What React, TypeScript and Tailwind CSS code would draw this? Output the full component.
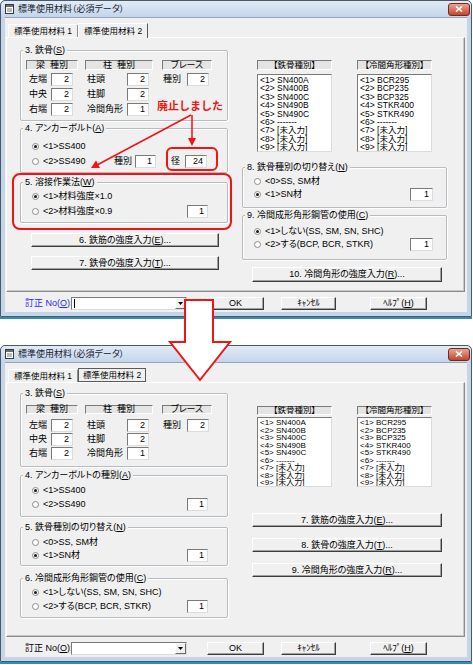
import React from "react";

type Kids = { children?: React.ReactNode };

const U = ({ c }: { c: string }) => <span className="underline">{c}</span>;

function Num({ v, w = "w-[22px]" }: { v: string; w?: string }) {
  return (
    <div
      className={`${w} h-[13px] shrink-0 bg-white border border-t-[#7a7a7a] border-l-[#7a7a7a] border-r-[#dcdcdc] border-b-[#dcdcdc] flex items-center justify-end pr-[3px] leading-none`}
    >
      {v}
    </div>
  );
}

function Radio({ on }: { on?: boolean }) {
  return (
    <span className="w-[7px] h-[7px] shrink-0 rounded-full border border-[#8c8c8c] bg-white flex items-center justify-center">
      {on && <span className="w-[3px] h-[3px] rounded-full bg-[#1a1a1a]" />}
    </span>
  );
}

function Opt({
  on,
  label,
  h = "h-[14px]",
  children,
}: { on?: boolean; label: string; h?: string } & Kids) {
  return (
    <div className={`${h} flex items-center`}>
      <Radio on={on} />
      <span className="ml-[4px] whitespace-nowrap">{label}</span>
      {children}
    </div>
  );
}

function Group({
  title,
  className = "",
  children,
}: { title: React.ReactNode; className?: string } & Kids) {
  return (
    <div
      className={`shrink-0 border border-[#b7bcc1] rounded-[2px] shadow-[inset_1px_1px_0_#fff,1px_1px_0_#fff] ${className}`}
    >
      <div className="-mt-[6px] ml-[2px] w-fit px-[2px] bg-[#f0f0f0] leading-[11px] whitespace-nowrap">
        {title}
      </div>
      {children}
    </div>
  );
}

function Btn({ className = "", children }: { className?: string } & Kids) {
  return (
    <div
      className={`shrink-0 bg-[#f0f0f0] border border-t-white border-l-white border-r-[#3c3c3c] border-b-[#3c3c3c] shadow-[inset_-1px_-1px_0_#a0a0a0] flex items-center justify-center whitespace-nowrap leading-none ${className}`}
    >
      {children}
    </div>
  );
}

function Hdr({ className = "", children }: { className?: string } & Kids) {
  return (
    <div
      className={`shrink-0 bg-[#e4e4e4] border border-t-[#7a7a7a] border-l-[#7a7a7a] border-r-white border-b-white flex items-center justify-center whitespace-pre leading-none ${className}`}
    >
      {children}
    </div>
  );
}

function List({
  items,
  row,
  className = "",
}: {
  items: string[];
  row: string;
  className?: string;
}) {
  return (
    <div
      className={`w-[75px] shrink-0 bg-white border border-t-[#7a7a7a] border-l-[#7a7a7a] border-r-[#dcdcdc] border-b-[#dcdcdc] pl-[2px] overflow-hidden ${className}`}
    >
      {items.map((t) => (
        <div key={t} className={`whitespace-pre flex items-center ${row}`}>
          {t}
        </div>
      ))}
    </div>
  );
}

const steelList = [
  "<1> SN400A",
  "<2> SN400B",
  "<3> SN400C",
  "<4> SN490B",
  "<5> SN490C",
  "<6> -------",
  "<7> [未入力]",
  "<8> [未入力]",
  "<9> [未入力]",
];
const coldList = [
  "<1> BCR295",
  "<2> BCP235",
  "<3> BCP325",
  "<4> STKR400",
  "<5> STKR490",
  "<6> -------",
  "<7> [未入力]",
  "<8> [未入力]",
  "<9> [未入力]",
];

function Steel({ box, hdr, rows }: { box: string; hdr: string; rows: string }) {
  return (
    <Group title={<>3. 鉄骨(<U c="S" />)</>} className={box}>
      <div className={`ml-[5px] flex ${hdr}`}>
        <Hdr className="w-[52px]">梁  種別</Hdr>
        <Hdr className="w-[68px] ml-[7px]">柱  種別</Hdr>
        <Hdr className="w-[50px] ml-[9px]">ブレース</Hdr>
      </div>
      <div className={`flex flex-col pl-[8px] ${rows}`}>
        <div className="flex items-center h-[13px]">
          <span className="w-[22px]">左端</span>
          <Num v="2" />
          <span className="w-[40px] ml-[14px]">柱頭</span>
          <Num v="2" />
          <span className="w-[24px] ml-[14px]">種別</span>
          <Num v="2" />
        </div>
        <div className="flex items-center h-[13px]">
          <span className="w-[22px]">中央</span>
          <Num v="2" />
          <span className="w-[40px] ml-[14px]">柱脚</span>
          <Num v="2" />
        </div>
        <div className="flex items-center h-[13px]">
          <span className="w-[22px]">右端</span>
          <Num v="2" />
          <span className="w-[40px] ml-[14px] whitespace-nowrap">冷間角形</span>
          <Num v="1" />
        </div>
      </div>
    </Group>
  );
}

function Win({
  focusTab,
  blue,
  caret,
  children,
}: { focusTab?: boolean; blue?: boolean; caret?: boolean } & Kids) {
  return (
    <div className="w-[472px] shrink-0 flex flex-col">
      <div className="h-[317px] flex flex-col border border-[#4a5868] rounded-t-[5px] bg-[#c4d5ea] px-[4px] pb-[4px]">
        <div className="h-[16px] shrink-0 flex items-center bg-gradient-to-b from-[#e2ebf6] to-[#c4d5ea] -mx-[4px] pl-[4px] pr-[1px] rounded-t-[5px]">
          <svg width="9" height="10" viewBox="0 0 9 10">
            <rect x="0.5" y="0.5" width="8" height="9" fill="#fff" stroke="#3a3a3a" />
            <rect x="1" y="1" width="7" height="2" fill="#6b6b6b" />
            <path d="M2 5h5M2 7h5" stroke="#7a7a7a" />
          </svg>
          <span className="ml-[4px] text-[#17212d]">標準使用材料（必須データ）</span>
          <div className="ml-auto w-[22px] h-[13px] rounded-[3px] border border-[#6e2a22] bg-gradient-to-b from-[#e9a392] to-[#c2432d] flex items-center justify-center">
            <svg width="8" height="6" viewBox="0 0 8 6">
              <path d="M1 0.5 7 5.5M7 0.5 1 5.5" stroke="#fff" strokeWidth="1.6" />
            </svg>
          </div>
        </div>
        <div className="flex-1 flex flex-col bg-[#f0f0f0] border-t border-[#95a6ba]">
          <div className="h-[19px] shrink-0 flex items-end pl-[3px] text-[8.5px]">
            <div className="h-[13px] px-[5px] flex items-center border-t border-l border-r border-t-white border-l-white border-r-[#8c8c8c] rounded-t-[2px] whitespace-nowrap">
              標準使用材料 1
            </div>
            {focusTab ? (
              <div className="h-[14px] px-[4px] flex items-center border border-[#5a5a5a] whitespace-nowrap">
                標準使用材料 2
              </div>
            ) : (
              <div className="h-[15px] -mb-px px-[5px] flex items-center bg-[#f0f0f0] border-t border-l border-r border-t-white border-l-white border-r-[#5a5a5a] relative whitespace-nowrap">
                標準使用材料 2
              </div>
            )}
          </div>
          <div className="ml-[1px] w-[459px] h-[255px] shrink-0 border border-t-white border-l-white border-r-[#8c8c8c] border-b-[#8c8c8c] shadow-[inset_-1px_-1px_0_#c8c8c8]">
            {children}
          </div>
          <div className="flex-1 flex items-center pl-[20px] pt-[2px]">
            <span className={`w-[46px] whitespace-nowrap ${blue ? "text-[#2828ff]" : ""}`}>
              訂正 No(<U c="O" />):
            </span>
            <div className="w-[116px] h-[13px] bg-white border border-t-[#7a7a7a] border-l-[#7a7a7a] border-r-[#dcdcdc] border-b-[#dcdcdc] flex">
              {caret && <span className="ml-[2px] mt-[1px] w-px h-[9px] bg-black" />}
              <div className="ml-auto w-[11px] h-full bg-[#f0f0f0] border border-t-white border-l-white border-r-[#6a6a6a] border-b-[#6a6a6a] flex items-center justify-center">
                <svg width="5" height="3" viewBox="0 0 5 3">
                  <path d="M0 0h5L2.5 3z" fill="#000" />
                </svg>
              </div>
            </div>
            <Btn className="ml-[20px] w-[57px] h-[13px]">OK</Btn>
            <Btn className="ml-[17px] w-[55px] h-[13px]">ｷｬﾝｾﾙ</Btn>
            <Btn className="ml-[34px] w-[57px] h-[13px]">
              ﾍﾙﾌﾟ(<U c="H" />)
            </Btn>
          </div>
        </div>
      </div>
      <div className="h-[2px] bg-[#2d8fb5]" />
    </div>
  );
}

function TopPanel() {
  return (
    <div className="flex pl-[13px] pt-[12px]">
      <div className="w-[208px] shrink-0 flex flex-col">
        <Steel box="h-[71px]" hdr="mt-[4px] h-[10px]" rows="mt-[3px] gap-[2px]" />
        <Group title={<>4. アンカーボルト(<U c="A" />)</>} className="h-[45px] mt-[7px]">
          <div className="mt-[5px] flex flex-col gap-[1px] pl-[11px]">
            <Opt on label="<1>SS400" />
            <div className="h-[14px] flex items-center">
              <Radio />
              <span className="ml-[4px] w-[71px] whitespace-nowrap">{"<2>SS490"}</span>
              <span className="w-[21px]">種別</span>
              <Num v="1" w="w-[21px]" />
              <span className="ml-[15px] w-[14px]">径</span>
              <Num v="24" />
            </div>
          </div>
        </Group>
        <Group title={<>5. 溶接作業法(<U c="W" />)</>} className="h-[41px] mt-[9px]">
          <div className="mt-[1px] flex flex-col gap-[1px] pl-[11px] pr-[19px]">
            <Opt on label="<1>材料強度×1.0" />
            <Opt label="<2>材料強度×0.9">
              <div className="ml-auto">
                <Num v="1" w="w-[21px]" />
              </div>
            </Opt>
          </div>
        </Group>
        <Btn className="mt-[10px] ml-[11px] w-[188px] h-[14px]">
          6. 鉄筋の強度入力(<U c="E" />)...
        </Btn>
        <Btn className="mt-[9px] ml-[11px] w-[188px] h-[14px]">
          7. 鉄骨の強度入力(<U c="T" />)...
        </Btn>
      </div>
      <div className="w-[205px] ml-[14px] shrink-0 flex flex-col">
        <div className="mt-[10px] flex h-[10px] text-[8.5px]">
          <Hdr className="ml-[15px] w-[75px]">【鉄骨種別】</Hdr>
          <Hdr className="ml-[25px] w-[75px]">【冷間角形種別】</Hdr>
        </div>
        <div className="mt-[4px] flex">
          <List
            items={steelList}
            row="h-[8.4px] leading-[8.4px]"
            className="ml-[15px] h-[78px] text-[8.5px] pt-px"
          />
          <List
            items={coldList}
            row="h-[8.4px] leading-[8.4px]"
            className="ml-[25px] h-[78px] text-[8.5px] pt-px"
          />
        </div>
        <Group title={<>8. 鉄骨種別の切り替え(<U c="N" />)</>} className="h-[41px] mt-[15px]">
          <div className="mt-[2px] flex flex-col pl-[11px] pr-[13px]">
            <Opt h="h-[13px]" label="<0>SS, SM材" />
            <Opt h="h-[13px]" on label="<1>SN材">
              <div className="ml-auto">
                <Num v="1" w="w-[23px]" />
              </div>
            </Opt>
          </div>
        </Group>
        <Group title={<>9. 冷間成形角形鋼管の使用(<U c="C" />)</>} className="h-[45px] mt-[7px]">
          <div className="mt-[4px] flex flex-col pl-[11px] pr-[13px]">
            <Opt h="h-[13px]" on label="<1>しない(SS, SM, SN, SHC)" />
            <Opt h="h-[13px]" label="<2>する(BCP, BCR, STKR)">
              <div className="ml-auto">
                <Num v="1" w="w-[23px]" />
              </div>
            </Opt>
          </div>
        </Group>
        <Btn className="mt-[7px] ml-[10px] w-[190px] h-[15px]">
          10. 冷間角形の強度入力(<U c="R" />)...
        </Btn>
      </div>
    </div>
  );
}

function BottomPanel() {
  return (
    <div className="flex pl-[13px] pt-[10px]">
      <div className="w-[208px] shrink-0 flex flex-col">
        <Steel box="h-[74px]" hdr="mt-[6px] h-[9px]" rows="mt-[5px] gap-[1px]" />
        <Group title={<>4. アンカーボルトの種別(<U c="A" />)</>} className="h-[42px] mt-[8px]">
          <div className="mt-[2px] flex flex-col pl-[11px] pr-[19px]">
            <Opt on label="<1>SS400" />
            <Opt label="<2>SS490">
              <div className="ml-auto">
                <Num v="1" w="w-[21px]" />
              </div>
            </Opt>
          </div>
        </Group>
        <Group title={<>5. 鉄骨種別の切り替え(<U c="N" />)</>} className="h-[39px] mt-[10px]">
          <div className="mt-[2px] flex flex-col pl-[11px] pr-[19px]">
            <Opt label="<0>SS, SM材" />
            <Opt on h="h-[13px]" label="<1>SN材">
              <div className="ml-auto">
                <Num v="1" w="w-[21px]" />
              </div>
            </Opt>
          </div>
        </Group>
        <Group title={<>6. 冷間成形角形鋼管の使用(<U c="C" />)</>} className="h-[40px] mt-[12px]">
          <div className="mt-[1px] flex flex-col pl-[11px] pr-[19px]">
            <Opt on label="<1>しない(SS, SM, SN, SHC)" />
            <Opt label="<2>する(BCP, BCR, STKR)">
              <div className="ml-auto">
                <Num v="1" w="w-[21px]" />
              </div>
            </Opt>
          </div>
        </Group>
      </div>
      <div className="w-[205px] ml-[14px] shrink-0 flex flex-col">
        <div className="mt-[13px] flex h-[9px] text-[8.5px]">
          <Hdr className="ml-[15px] w-[75px]">【鉄骨種別】</Hdr>
          <Hdr className="ml-[25px] w-[75px]">【冷間角形種別】</Hdr>
        </div>
        <div className="mt-[2px] flex">
          <List
            items={steelList}
            row="h-[7.5px] leading-[7.5px]"
            className="ml-[15px] h-[70px] text-[8px] pt-px"
          />
          <List
            items={coldList}
            row="h-[7.5px] leading-[7.5px]"
            className="ml-[25px] h-[70px] text-[8px] pt-px"
          />
        </div>
        <Btn className="mt-[26px] ml-[10px] w-[190px] h-[14px]">
          7. 鉄筋の強度入力(<U c="E" />)...
        </Btn>
        <Btn className="mt-[11px] ml-[10px] w-[190px] h-[14px]">
          8. 鉄骨の強度入力(<U c="T" />)...
        </Btn>
        <Btn className="mt-[11px] ml-[10px] w-[190px] h-[14px]">
          9. 冷間角形の強度入力(<U c="R" />)...
        </Btn>
      </div>
    </div>
  );
}

export default function App() {
  return (
    <div className="relative w-[473px] h-[665px] bg-white overflow-hidden font-['Liberation_Sans','Noto_Sans_CJK_JP',sans-serif] text-[9px] leading-[11px] text-black [font-feature-settings:'palt']">
      <div className="flex flex-col">
        <Win blue caret>
          <TopPanel />
        </Win>
        <div className="h-[26px] shrink-0" />
        <Win focusTab>
          <BottomPanel />
        </Win>
      </div>

      {/* annotations drawn over the screenshots */}
      <svg className="absolute left-0 top-0 pointer-events-none" width="473" height="665">
        <rect x="167" y="148" width="50" height="22" rx="5" fill="none" stroke="#f01414" strokeWidth="2" />
        <rect x="13" y="174" width="218" height="55" rx="7" fill="none" stroke="#f01414" strokeWidth="2" />
        <line x1="192" y1="115" x2="192" y2="139" stroke="#f01414" strokeWidth="1.5" />
        <polygon points="188,138 196,138 192,146" fill="#f01414" />
        <line x1="191" y1="115" x2="97" y2="165" stroke="#f01414" strokeWidth="1.5" />
        <polygon points="91,168 100,168 96,160.5" fill="#f01414" />
        <polygon
          points="185,300 213,300 213,342 230,342 200,380 170,342 185,342"
          fill="#fff"
          stroke="#f01414"
          strokeWidth="2"
        />
      </svg>
      <span className="absolute left-[157px] top-[100px] text-[11px] leading-[13px] font-bold text-[#f01414] [font-feature-settings:normal]">
        廃止しました
      </span>
    </div>
  );
}
